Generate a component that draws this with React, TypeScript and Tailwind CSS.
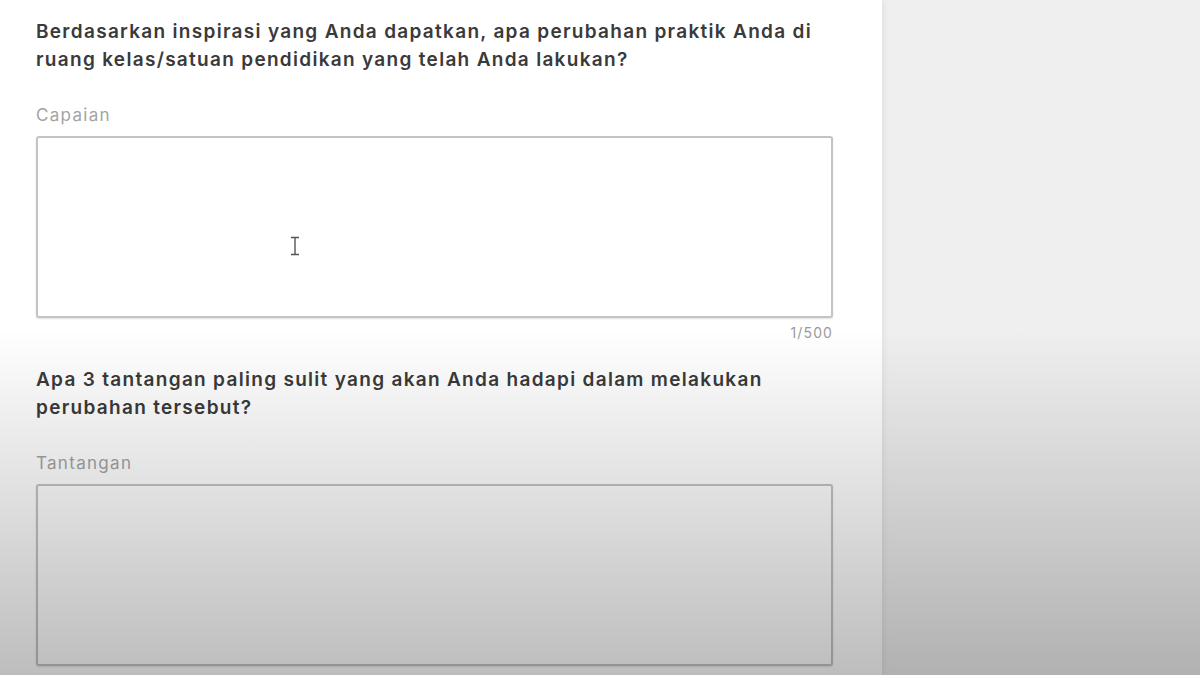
import React from "react";

function Field({ question, label, counter }: { question: React.ReactNode; label: string; counter: string }) {
  return (
    <div className="flex flex-col">
      <h2 className="text-[19px] leading-[28px] font-semibold text-[#3a3a3a] tracking-[1.3px]">{question}</h2>
      <div className="mt-[29px] text-[17px] leading-[24px] tracking-[1.3px] text-[#a3a3a3]">{label}</div>
      <div className="mt-[9px] h-[182px] rounded-[3px] border-2 border-[#c4c4c4] bg-white shadow-[0_1px_2px_rgba(0,0,0,0.12)]" />
      <div className="mt-[5px] text-right text-[14px] leading-[20px] tracking-[1.1px] text-[#9a9a9a]">{counter}</div>
    </div>
  );
}

export default function App() {
  return (
    <div
      className="relative flex h-[675px] w-[1200px] overflow-hidden bg-[#efefef]"
      style={{ fontFamily: "Inter, 'Noto Sans', sans-serif" }}
    >
      <div className="relative h-full w-[882px] bg-white shadow-[2px_0_6px_rgba(0,0,0,0.06)]">
        <div className="flex w-[833px] flex-col gap-[23px] pl-[36px] pt-[18px]">
          <Field
            question={
              <>
                Berdasarkan inspirasi yang Anda dapatkan, apa perubahan praktik Anda di
                <br />
                ruang kelas/satuan pendidikan yang telah Anda lakukan?
              </>
            }
            label="Capaian"
            counter="1/500"
          />
          <Field
            question={
              <>
                Apa 3 tantangan paling sulit yang akan Anda hadapi dalam melakukan
                <br />
                perubahan tersebut?
              </>
            }
            label="Tantangan"
            counter="1/500"
          />
        </div>
        <svg
          className="absolute left-[289px] top-[236px]"
          width="12"
          height="20"
          viewBox="0 0 12 20"
          fill="none"
        >
          <path d="M2 1.5h8M6 1.5v17M2 18.5h8" stroke="#555" strokeWidth="1.4" />
        </svg>
      </div>
      <div className="flex-1" />
      <div
        className="pointer-events-none absolute inset-x-0 bottom-0 top-[330px]"
        style={{ background: "linear-gradient(to bottom, rgba(0,0,0,0) 0%, rgba(0,0,0,0.26) 100%)" }}
      />
    </div>
  );
}
